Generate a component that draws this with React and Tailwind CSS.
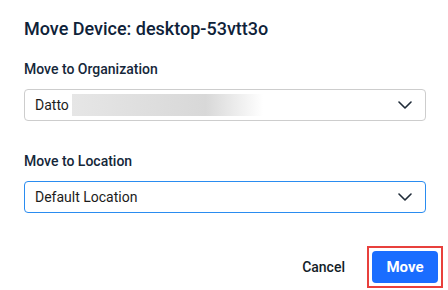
import React from 'react';

const Chevron = () => (
  <svg width="14" height="8" viewBox="0 0 14 8" fill="none" className="shrink-0">
    <path d="M1 1l6 6 6-6" stroke="#1f2b38" strokeWidth="1.6" strokeLinecap="round" strokeLinejoin="round" />
  </svg>
);

const App = () => {
  return (
    <div className="w-[448px] h-[290px] bg-white pl-6 pr-[22px] pt-[17px] font-['Roboto',sans-serif] overflow-hidden">
      <h1 className="text-[18px] leading-6 font-medium text-[#0e2239]">Move Device: desktop-53vtt3o</h1>

      {/* Organization */}
      <label className="block mt-[18px] text-[14px] leading-5 font-medium text-[#15273a]">Move to Organization</label>
      <div className="mt-[10px] h-8 flex items-center justify-between border border-[#cdcdcd] rounded pl-[10px] pr-[13px]">
        <div className="flex items-center">
          <span className="text-[14px] leading-5 text-[#1c1c1c]">Datto</span>
          <div className="ml-[3px] w-[191px] h-[22px] bg-linear-to-r from-[#e6e6e6] via-[#d8d8d8] via-70% to-white" />
        </div>
        <Chevron />
      </div>

      {/* Location */}
      <label className="block mt-[30px] text-[14px] leading-5 font-medium text-[#15273a]">Move to Location</label>
      <div className="mt-[10px] h-8 flex items-center justify-between border border-[#2a8cf0] rounded pl-[10px] pr-[13px]">
        <span className="text-[14px] leading-5 text-[#1c1c1c]">Default Location</span>
        <Chevron />
      </div>

      {/* Footer */}
      <div className="mt-[33px] flex items-center justify-end -mr-[17px]">
        <button className="text-[14px] leading-5 font-medium text-[#131d28] mr-[22px]">Cancel</button>
        <div className="border-2 border-[#e8403c] p-[3px]">
          <button className="w-[66px] h-8 rounded bg-[#1a6dff] text-white text-[15px] font-bold">Move</button>
        </div>
      </div>
    </div>
  );
};

export default App;
